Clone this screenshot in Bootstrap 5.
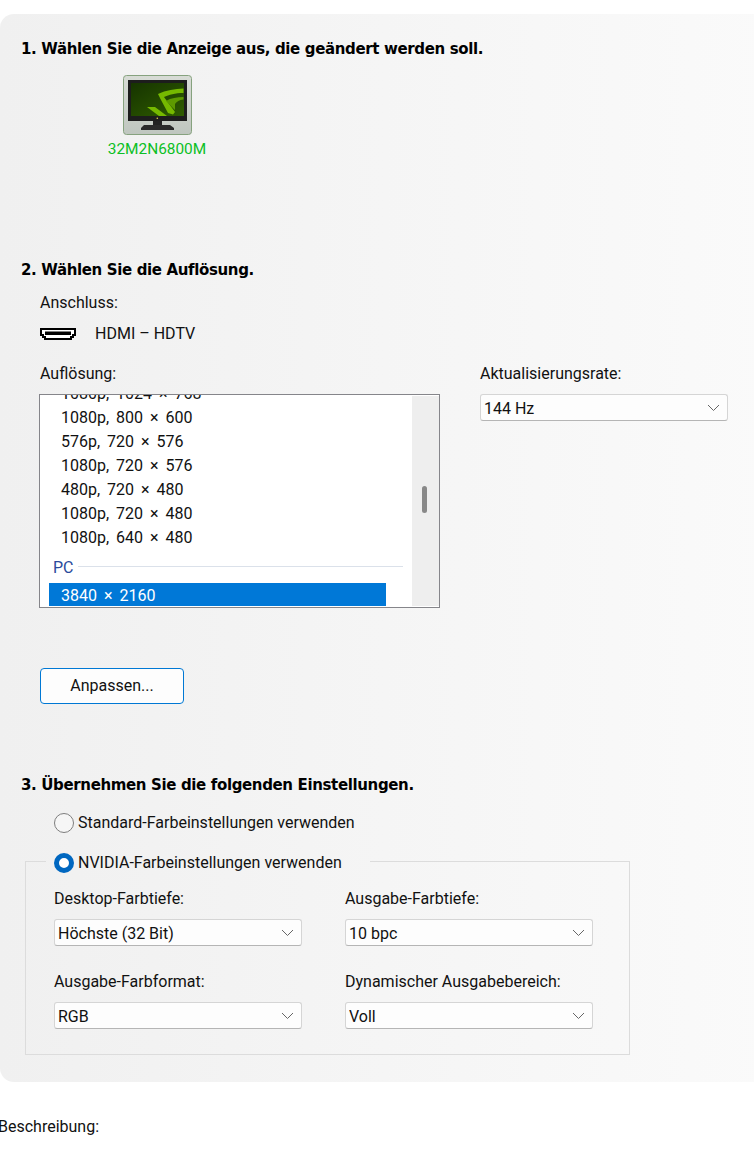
<!DOCTYPE html>
<html lang="de">
<head>
<meta charset="utf-8">
<title>Auflösung ändern</title>
<link href="https://cdn.jsdelivr.net/npm/bootstrap@5.3.0/dist/css/bootstrap.min.css" rel="stylesheet">
<style>
html,body{background:#fff;overflow:hidden}
body{font-family:Roboto,"Noto Sans",sans-serif;font-size:16px;line-height:20px;color:#111;width:754px;height:1155px}
.shell{margin-top:14px;width:768px;height:1068px;border-radius:14px;background:linear-gradient(90deg,#f0f0f0,#fafafa);padding:25px 0 0 21px}
.step{font-family:"DejaVu Sans",sans-serif;font-weight:700;font-size:15px;letter-spacing:-.36px;line-height:20px;margin:0;color:#000}
.tile{width:69px;height:60px;margin:16px 0 0 102px;display:block}
.display-name{width:140px;margin:4px 0 0 66px;text-align:center;color:#0cbf25;font-size:15.4px}
.gap-step2{margin-top:101px}
.inset{margin-left:18px}
.anschluss{margin-top:13px;padding-left:1px}
.conn{height:20px;margin-top:11px;display:flex;align-items:center;padding-left:1px}
.conn svg{margin-right:18px}
.res-row{margin-top:20px;width:689px;justify-content:space-between}
.res-left{width:401px}
.res-left>div:first-child{padding-left:1px}
.res-right{width:248px}
.listbox{margin-top:10px;height:214px;border:1px solid #85858a;background:#fff;overflow:hidden;position:relative;padding-left:9px}
.listbox-inner{margin-top:-13px;width:337px}
.opt{height:24px;line-height:24px;padding-left:12px;white-space:nowrap;word-spacing:3px}
.opt.on{background:#0078d7;color:#fff;height:23px;line-height:26px}
.grp{height:22px;margin-top:7px;margin-bottom:4px;padding-left:4px;display:flex;align-items:center;color:#2a4a9c;width:354px}
.grp i{flex:1;height:1px;background:#dbe1ea;margin:-4px 0 0 4px}
.track{position:absolute;top:1px;right:0;bottom:1px;width:27px;background:#eee}
.thumb{position:absolute;left:10px;top:90px;width:5px;height:27px;border-radius:3px;background:#888}
.dd{height:27px;padding:2px 24px 0 3px;border:1px solid #d5d5d5;border-bottom-color:#b5b5b5;border-radius:3px;background-color:#fdfdfd;background-image:url("data:image/svg+xml,%3csvg xmlns='http://www.w3.org/2000/svg' viewBox='0 0 13 8'%3e%3cpath fill='none' stroke='%23666' d='M1 1l5.500 5.500L12 1'/%3e%3c/svg%3e");background-position:right 7px center;background-size:13px 8px;font-size:inherit;line-height:23px;color:#111;box-shadow:none}
.dd-top{margin-top:10px}
.adjust{display:block;margin:60px 0 0 19px;width:144px;height:36px;padding:0;border:1px solid #0078d4;border-radius:4px;background:#fdfdfd;font-size:inherit;color:#111}
.gap-step3{margin-top:71px}
.choice{display:flex;align-items:center;gap:4px;margin:0}
.choice .form-check-input{width:20px;height:20px;margin:0;flex:none;background:#f6f6f6;border:1px solid #7e7e7e;box-shadow:none}
.choice .form-check-input:checked{background:#fff;border:5.500px solid #0067c0}
.first-choice{margin:18px 0 0 33px}
.colour-box{margin:17px 0 0 4px;width:605px;height:205px;border:1px solid #dcdcdc;padding:0;display:block;min-width:0}
.colour-box legend{float:none;width:auto;margin:0 0 0 20px;padding:3px 28px 0 8px;font-size:inherit;line-height:20px}
.colour-grid{display:grid;grid-template-columns:248px 248px;column-gap:43px;margin:16px 0 0 28px}
.colour-grid .lbl{height:20px}
.colour-grid .dd{margin-top:10px;margin-bottom:26px}
.desc{margin:35px 0 0 -2px}
</style>
</head>
<body>
<main class="shell">
  <h2 class="step">1. Wählen Sie die Anzeige aus, die geändert werden soll.</h2>
  <svg class="tile" viewBox="0 0 69 60" aria-label="Monitor">
    <defs>
      <linearGradient id="s" x1="0" y1="0" x2="1" y2="1"><stop offset="0" stop-color="#163400"/><stop offset="1" stop-color="#2f5c00"/></linearGradient>
      <linearGradient id="t" x1="0" y1="0" x2="0" y2="1"><stop offset="0" stop-color="#d8dcd6"/><stop offset="1" stop-color="#bfc6bf"/></linearGradient>
    </defs>
    <rect x=".5" y=".5" width="68" height="59" rx="3" fill="url(#t)" stroke="#86a27e"/>
    <rect x="5" y="5" width="59" height="41" fill="#1d1d1d"/>
    <rect x="8" y="8" width="53" height="33" fill="url(#s)"/>
    <path d="M35 19C43 15 52 14 60.500 13.500V18C52 18 46 20 41 22L52 37L50 39.500L45 38L38 25Z" fill="#76b900"/>
    <path d="M43 26C48 23 54 22 60.500 22V24.500C56 25 54 26.500 52 29V35Z" fill="#5e9a00"/>
    <path d="M24 32H32L44 41H36Z" fill="#76b900"/>
    <circle cx="34.300" cy="43.300" r=".8" fill="#e6d24a"/>
    <rect x="30" y="46" width="9" height="4" fill="#222"/>
    <path d="M21 50H47L51 53V55H18V53Z" fill="#2a2a2a"/>
  </svg>
  <div class="display-name">32M2N6800M</div>

  <h2 class="step gap-step2">2. Wählen Sie die Auflösung.</h2>
  <div class="inset anschluss">Anschluss:</div>
  <div class="inset conn">
    <svg width="37" height="14" viewBox="0 0 37 14" aria-label="HDMI"><path d="M1 2H35V8H33V10H31V12H5V10H3V8H1Z" fill="#fff" stroke="#000" stroke-width="2"/><rect x="5" y="4.500" width="26" height="3.500" fill="#000"/></svg>
    <span>HDMI – HDTV</span>
  </div>
  <div class="d-flex inset res-row">
    <div class="res-left">
      <div>Auflösung:</div>
      <div class="listbox">
        <div class="listbox-inner">
          <div class="opt">1080p, 1024 × 768</div>
          <div class="opt">1080p, 800 × 600</div>
          <div class="opt">576p, 720 × 576</div>
          <div class="opt">1080p, 720 × 576</div>
          <div class="opt">480p, 720 × 480</div>
          <div class="opt">1080p, 720 × 480</div>
          <div class="opt">1080p, 640 × 480</div>
          <div class="grp">PC<i></i></div>
          <div class="opt on">3840 × 2160</div>
        </div>
        <div class="track"><div class="thumb"></div></div>
      </div>
    </div>
    <div class="res-right">
      <div>Aktualisierungsrate:</div>
      <select class="form-select dd dd-top" aria-label="Aktualisierungsrate"><option>144 Hz</option></select>
    </div>
  </div>
  <button type="button" class="btn adjust">Anpassen...</button>

  <h2 class="step gap-step3">3. Übernehmen Sie die folgenden Einstellungen.</h2>
  <label class="choice first-choice"><input class="form-check-input" type="radio" name="c"><span>Standard-Farbeinstellungen verwenden</span></label>
  <fieldset class="colour-box">
    <legend><label class="choice"><input class="form-check-input" type="radio" name="c" checked><span>NVIDIA-Farbeinstellungen verwenden</span></label></legend>
    <div class="colour-grid">
      <div><div class="lbl">Desktop-Farbtiefe:</div><select class="form-select dd" aria-label="Desktop-Farbtiefe"><option>Höchste (32 Bit)</option></select></div>
      <div><div class="lbl">Ausgabe-Farbtiefe:</div><select class="form-select dd" aria-label="Ausgabe-Farbtiefe"><option>10 bpc</option></select></div>
      <div><div class="lbl">Ausgabe-Farbformat:</div><select class="form-select dd" aria-label="Ausgabe-Farbformat"><option>RGB</option></select></div>
      <div><div class="lbl">Dynamischer Ausgabebereich:</div><select class="form-select dd" aria-label="Dynamischer Ausgabebereich"><option>Voll</option></select></div>
    </div>
  </fieldset>
</main>
<div class="desc">Beschreibung:</div>
<script src="https://cdn.jsdelivr.net/npm/bootstrap@5.3.0/dist/js/bootstrap.bundle.min.js"></script>
</body>
</html>
